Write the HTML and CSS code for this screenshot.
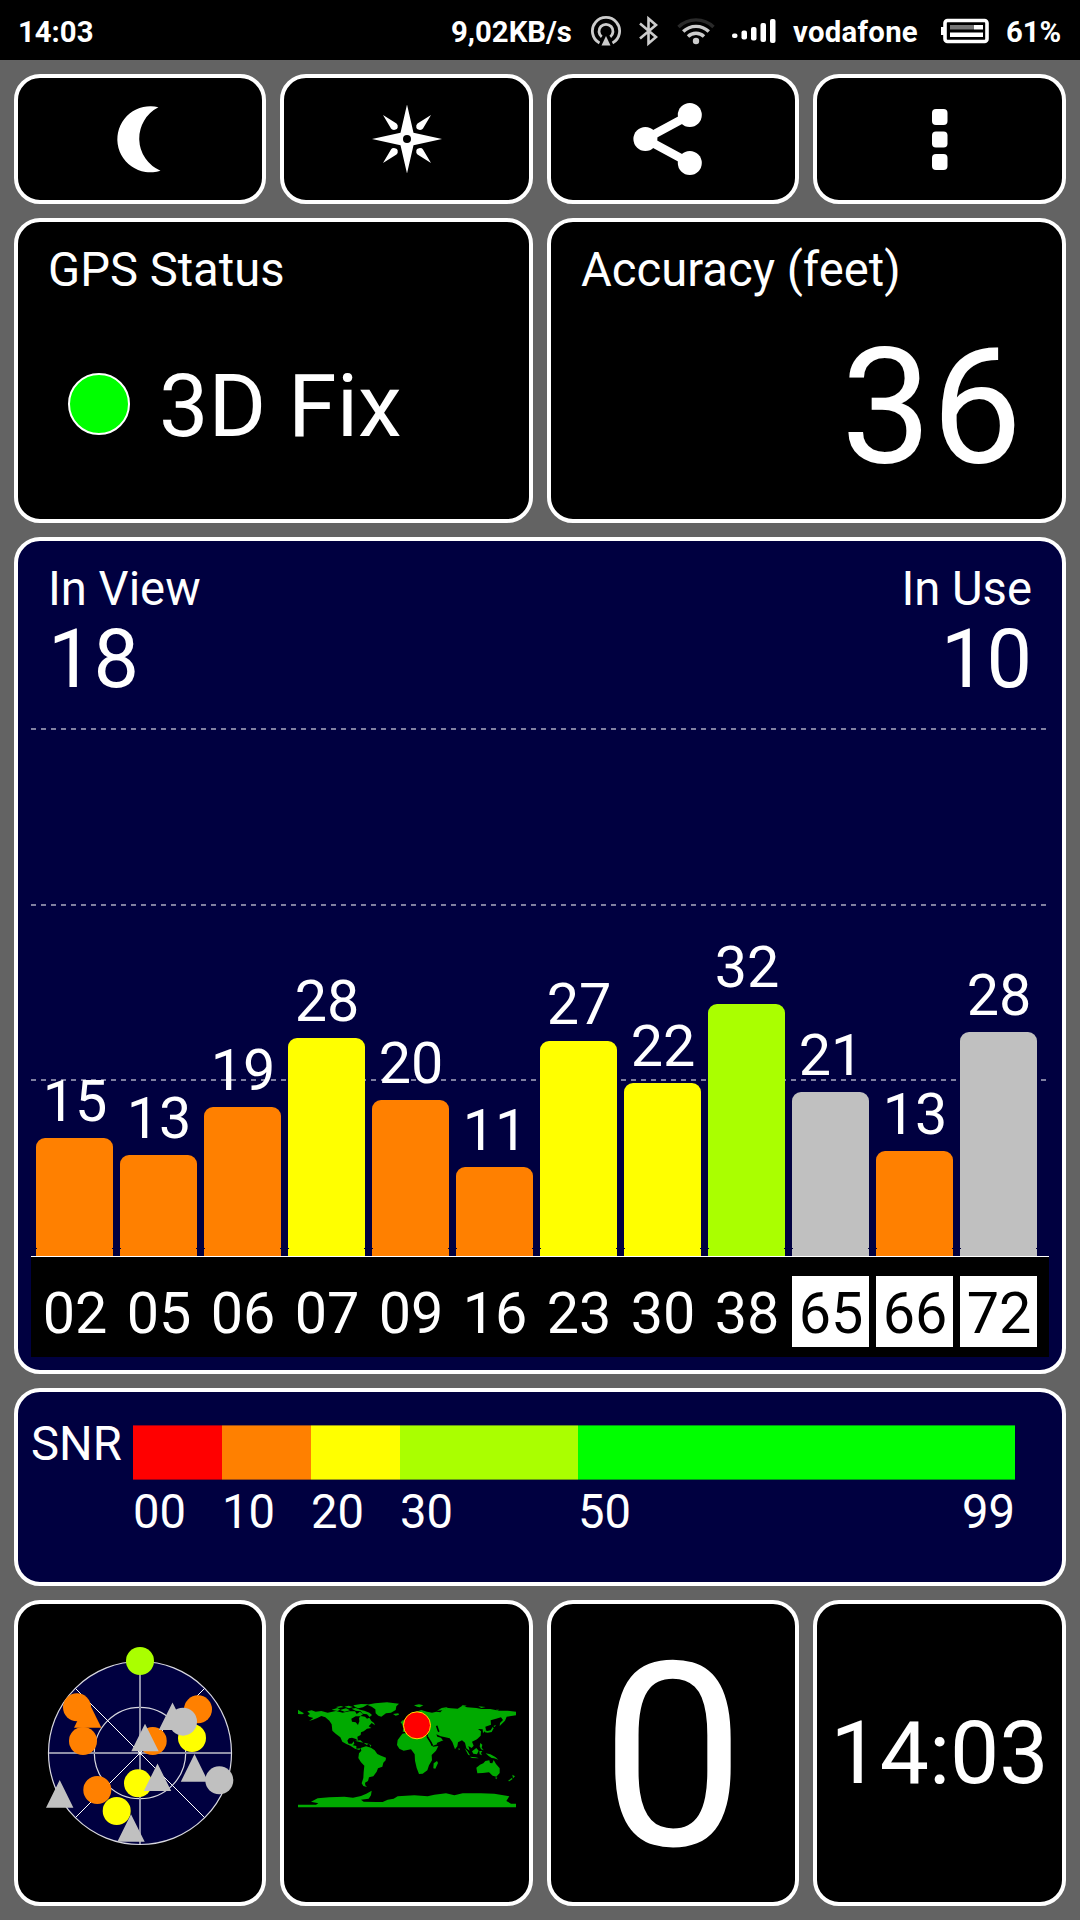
FILE: index.html
```html
<!DOCTYPE html>
<html lang="en">
<head>
<meta charset="utf-8">
<title>GPS Test</title>
<link rel="stylesheet" href="styles.css">
</head>
<body>
<header class="status">
  <span>14:03</span>
  <span>9,02KB/s</span>
  <svg width="32" height="32" viewBox="-16 -16 32 32" fill="none" stroke="#ccc" stroke-width="2.8"><path d="M-6.5 12A13.6 13.6 0 1 1 6.5 12"/><path d="M-4.3 5.8A7 7 0 1 1 4.3 5.8"/><path d="M0 5l4.5 9.5h-9z" fill="#ccc" stroke="none"/></svg>
  <svg width="22" height="32" viewBox="0 0 22 32" fill="none" stroke="#ccc" stroke-width="2.6"><path d="M3 8.500L19 22L11.500 28.500V3.500L19 10L3 23.500"/></svg>
  <svg width="40" height="32" viewBox="-20 0 40 32" fill="none" stroke="#ccc" stroke-width="3.4"><path d="M-17.500 12A25 25 0 0 1 17.500 12" stroke="#2a2a2a"/><path d="M-12.800 16.500A18.500 18.500 0 0 1 12.800 16.500"/><path d="M-8 21.500A11.500 11.500 0 0 1 8 21.500"/><circle cy="26" r="3.200" fill="#ccc" stroke="none"/></svg>
  <svg width="48" height="32" viewBox="0 0 48 32" fill="#fff"><rect x="2" y="18.500" width="5.500" height="4.500" rx="2"/><rect x="11.500" y="15.500" width="5.500" height="9" rx="2"/><rect x="21" y="12" width="5.500" height="13.500" rx="2"/><rect x="30.500" y="8" width="5.500" height="19" rx="2"/><rect x="40" y="4" width="5.500" height="24" rx="2"/></svg>
  <span class="carrier">vodafone</span>
  <svg width="48" height="32" viewBox="0 0 48 32"><rect x="4" y="5.500" width="42" height="21" rx="2.500" fill="none" stroke="#fff" stroke-width="3.600"/><path d="M0 12h3v8H0z" fill="#fff"/><path d="M9 10h24v4.500H9z" fill="#777"/><path d="M33 10h9v4.500h-9zM9 17.500h33v4.500H9z" fill="#fff"/></svg>
  <span>61%</span>
</header>

<main class="board">
  <button class="card tool" aria-label="Night mode"><svg width="80" height="80" viewBox="-40 -40 80 80" fill="#fff"><path d="M18.400-31.700A33 33 0 1 0 20.500 31.700A35 35 0 0 1 18.400-31.700Z"/></svg></button>
  <button class="card tool" aria-label="Compass"><svg width="80" height="80" viewBox="-40 -40 80 80" fill="#fff"><path d="M0-34.500L6.500-6.300L35 0L6.500 6.300L0 34.500L-6.500 6.300L-35 0L-6.500-6.300Z"/><path d="M-24-24L-10.500-15.500Q-8.800-14-9.300-11.500Q-9.500-9.500-12-9.200Q-15-8.800-16-10.500Z"/><path d="M24-24L10.500-15.500Q8.800-14 9.300-11.500Q9.500-9.500 12-9.200Q15-8.800 16-10.500Z"/><path d="M-24 24L-10.500 15.500Q-8.800 14-9.300 11.500Q-9.500 9.500-12 9.200Q-15 8.800-16 10.500Z"/><path d="M24 24L10.500 15.500Q8.800 14 9.300 11.500Q9.500 9.500 12 9.200Q15 8.800 16 10.500Z"/><circle r="4" fill="#000"/></svg></button>
  <button class="card tool" aria-label="Share"><svg width="80" height="80" viewBox="-40 -40 80 80" fill="#fff"><path d="M16.800-24L-27.600 0L16.800 24" fill="none" stroke="#fff" stroke-width="8.500"/><circle cx="16.800" cy="-24" r="12"/><circle cx="16.800" cy="24" r="12"/><circle cx="-27.600" r="12"/></svg></button>
  <button class="card tool" aria-label="More"><svg width="80" height="80" viewBox="-40 -40 80 80" fill="#fff"><rect x="-8" y="-30" width="15.500" height="16" rx="4"/><rect x="-8" y="-7.500" width="15.500" height="16" rx="4"/><rect x="-8" y="15" width="15.500" height="16" rx="4"/></svg></button>

  <section class="card half">
    <h2 class="label">GPS Status</h2>
    <div class="fix"><span class="lamp"></span><span class="fix-text">3D Fix</span></div>
  </section>
  <section class="card half">
    <h2 class="label">Accuracy (feet)</h2>
    <div class="accuracy">36</div>
  </section>

  <section class="card navy full sats">
    <div class="counts">
      <div><h2 class="label">In View</h2><div class="count">18</div></div>
      <div class="end"><h2 class="label">In Use</h2><div class="count">10</div></div>
    </div>
    <div class="chart">
      <div class="bars">
        <div class="sat"><span>15</span><i class="bar orange" style="height:118px"></i></div>
        <div class="sat"><span>13</span><i class="bar orange" style="height:101px"></i></div>
        <div class="sat"><span>19</span><i class="bar orange" style="height:149px"></i></div>
        <div class="sat"><span>28</span><i class="bar yellow" style="height:218px"></i></div>
        <div class="sat"><span>20</span><i class="bar orange" style="height:156px"></i></div>
        <div class="sat"><span>11</span><i class="bar orange" style="height:89px"></i></div>
        <div class="sat"><span>27</span><i class="bar yellow" style="height:215px"></i></div>
        <div class="sat"><span>22</span><i class="bar yellow" style="height:173px"></i></div>
        <div class="sat"><span>32</span><i class="bar lime" style="height:252px"></i></div>
        <div class="sat"><span>21</span><i class="bar grey" style="height:164px"></i></div>
        <div class="sat"><span>13</span><i class="bar orange" style="height:105px"></i></div>
        <div class="sat"><span>28</span><i class="bar grey" style="height:224px"></i></div>
      </div>
      <div class="ids">
        <span>02</span><span>05</span><span>06</span><span>07</span><span>09</span><span>16</span><span>23</span><span>30</span><span>38</span><span class="glonass">65</span><span class="glonass">66</span><span class="glonass">72</span>
      </div>
    </div>
  </section>

  <section class="card navy full snr">
    <span class="snr-name">SNR</span>
    <div class="scale">
      <div class="step"><i class="red"></i><span>00</span></div>
      <div class="step"><i class="orange"></i><span>10</span></div>
      <div class="step"><i class="yellow"></i><span>20</span></div>
      <div class="step"><i class="lime"></i><span>30</span></div>
      <div class="step"><i class="green"></i><span class="ends"><b>50</b><b>99</b></span></div>
    </div>
  </section>

  <section class="card tile">
    <svg width="220" height="220" viewBox="-110 -110 220 220">
      <circle r="91.500" fill="#000040" stroke="#d8d8e0" stroke-width="1.200"/>
      <circle r="45.700" fill="none" stroke="#d8d8e0" stroke-width="1.200"/>
      <path d="M-91 0H91M0-91V91" stroke="#8f8fa8" stroke-width="2"/>
      <path d="M-64.500-64.500L64.500 64.500M-64.500 64.500L64.500-64.500" stroke="#fff" stroke-width="1"/>
      <circle r="1.500" fill="#fff"/>
      <g fill="#ff8000"><circle cx="-63" cy="-45.700" r="14"/><path d="M-52.300-53L-38.600-25.300H-66Z"/><circle cx="-57" cy="-12" r="14"/><circle cx="58" cy="-43.700" r="14"/><circle cx="12.700" cy="-12" r="14"/><circle cx="-42.700" cy="37" r="14"/></g>
      <circle cy="-92" r="14" fill="#af0"/>
      <g fill="#ff0"><circle cx="52" cy="-15" r="14"/><circle cx="-2" cy="30.300" r="14"/><circle cx="-23.300" cy="58" r="14"/></g>
      <g fill="#c0c0c0"><path d="M32.500-50.500L46.200-23H18.800ZM5-29.300L18.700-1.700H-8.700ZM17.500 10.500L31.200 38H3.800ZM54.500 1L68.200 28.700H40.800ZM-9 61.300L4.700 88.700H-22.700ZM-80.300 27L-66.600 54.700H-94Z"/><circle cx="43" cy="-31.300" r="14"/><circle cx="79.300" cy="27.300" r="14"/></g>
    </svg>
  </section>
  <section class="card tile">
    <svg class="map" width="218" height="106" viewBox="51 65 654 318">
      <g fill="#0a0">
        <path d="M51 88L58 93L69 99L64 102L51 101ZM79 93L92 90L104 94L121 92L140 97L165 92L185 97L205 93L222 93L227 101L237 94L246 102L237 108L224 108L211 115L213 124L224 126L231 134L235 123L234 113L239 107L252 109L258 115L265 112L271 122L279 128L282 135L272 128L263 138L271 143L258 145L248 153L240 156L239 164L229 169L231 182L225 176L213 172L204 174L199 181L203 190L213 190L218 183L220 190L215 195L226 197L226 205L239 204L235 209L222 205L208 196L196 191L184 184L178 171L164 160L154 151L152 132L145 121L133 111L121 107L109 113L96 118L84 122L97 113L84 109L80 105L87 101Z"/>
        <path d="M258 73L282 69L318 66L354 70L346 78L344 89L330 97L315 99L301 109L292 106L284 99L283 87L272 79ZM336 101L352 99L354 103L344 106Z"/>
        <path d="M152 88L169 83L178 88L169 92ZM177 89L195 84L207 90L191 94ZM165 80L180 77L188 80L172 83ZM190 79L203 76L216 80L204 84ZM217 75L240 71L262 72L246 81L232 84L222 80ZM212 85L224 83L237 88L250 91L265 97L273 104L266 110L258 102L245 100L239 93L224 91Z"/>
        <path d="M239 203L255 198L270 202L281 210L289 221L300 226L315 232L314 240L307 247L304 259L291 264L287 274L277 288L264 291L261 302L252 307L253 315L258 320L247 317L242 309L247 293L248 275L250 256L240 246L232 233L234 219L241 211ZM222 181L238 180L247 187L233 184ZM248 187L263 190L257 194ZM265 190L271 196L268 199Z"/>
        <path d="M359 126L366 119L374 124L372 133L378 139L367 143L363 131ZM367 146L365 154L379 156L387 147L398 143L407 151L415 157L420 147L431 155L442 158L440 168L451 188L456 196L470 191L487 182L480 172L469 169L466 162L479 168L493 171L506 174L514 185L522 207L529 198L531 186L543 180L552 187L556 204L566 211L562 197L572 203L578 196L573 184L588 177L599 166L600 153L591 146L605 147L606 158L615 150L613 139L630 133L629 120L645 115L660 111L666 119L657 128L656 137L672 121L677 109L705 105V94L680 91L654 91L628 86L602 86L586 83L558 81L544 76L530 85L510 84L496 82L485 88L478 96L466 94L453 97L438 94L421 89L405 94L391 104L382 113L390 122L378 135Z"/>
        <path d="M364 160L378 157L400 156L404 164L420 166L439 167L446 182L456 199L472 197L465 211L452 224L453 240L444 255L439 270L425 280L414 281L407 263L402 241L401 222L390 207L368 211L355 205L348 194L350 179ZM468 242L471 248L463 265L457 264L458 249Z"/>
        <path d="M399 75L414 72L427 75L416 81L408 79ZM468 91L482 83L500 80L486 90ZM542 74L557 76L549 80ZM592 78L614 80L601 83ZM645 88L655 88L648 91ZM612 150L620 152L629 150L635 140L638 144L632 155L620 157L612 156ZM637 137L645 134L641 140ZM598 188L604 193L602 202L608 210L600 207L596 198ZM573 213L586 203L593 211L588 222L577 220ZM551 204L560 213L567 225L562 224ZM566 229L584 231L594 234L573 233ZM595 212L604 212L600 218L603 225L596 222ZM614 219L628 222L643 230L652 238L639 234L632 233L623 227ZM533 202L537 207L533 210Z"/>
        <path d="M586 262L597 253L607 249L613 242L625 240L627 248L634 249L638 239L645 251L656 264L656 278L646 289L635 286L624 276L605 278L589 279ZM642 292L649 291L646 297ZM694 283L702 288L696 294ZM692 293L695 296L685 303L681 302Z"/>
        <path d="M51 373H105L112 369L90 364L110 354L145 351L190 349L216 352L240 347L256 340L272 331L270 345L263 355L240 358L248 364L286 365L305 365L320 358L338 355L350 348L400 345L440 348L460 343L495 339L520 345L545 339L600 339L640 340L685 348L676 362L690 370H705V381H51Z"/>
      </g>
      <path d="M438 168L450 187L454 196M467 136L472 151L474 154M486 183L468 190" fill="none" stroke="#000" stroke-width="5"/>
      <circle cx="408" cy="135" r="40.500" fill="#f00" stroke="#fd0" stroke-width="3"/>
    </svg>
  </section>
  <section class="card tile speed">0</section>
  <section class="card tile clock">14:03</section>
</main>
</body>
</html>
```

FILE: styles.css
```css
* { box-sizing: border-box; }
body {
  margin: 0;
  width: 1080px;
  height: 1920px;
  overflow: hidden;
  background: #636363;
  color: #fff;
  font-family: Roboto, "Liberation Sans", sans-serif;
}
svg { display: block; flex: none; }

.status {
  display: grid;
  grid-template-columns: 433px 139px 47px 39px 54px 62px 149px 65px 74px;
  align-items: center;
  height: 60px;
  padding-left: 18px;
  background: #000;
  font-size: 29.3px;
  font-weight: 700;
  line-height: 60px;
  white-space: nowrap;
}
.status span { padding-top: 2px; }
.status .carrier { padding-left: 1px; letter-spacing: 0.3px; }

.board {
  display: grid;
  grid-template-columns: 252px 253px 252px 253px;
  grid-template-rows: 130px 305px 837px 198px 306px;
  gap: 14px;
  padding: 14px;
}
.card {
  border: 4px solid #fff;
  border-radius: 26px;
  background: #000;
  color: inherit;
  min-width: 0;
}
.navy { background: #000040; }
.half { grid-column: span 2; padding: 20px 30px 0; }
.full { grid-column: span 4; }
.tool, .tile { display: flex; align-items: center; justify-content: center; padding: 0; }

.label { margin: 0; font-size: 47.2px; font-weight: 400; line-height: 56px; }
.fix {
  display: flex;
  align-items: center;
  gap: 29px;
  height: 62px;
  margin: 75px 0 0 20px;
  font-size: 88px;
  line-height: 66px;
}
.fix-text { padding-top: 3px; }
.lamp { width: 62px; height: 62px; border: 2px solid #fff; border-radius: 50%; background: #0f0; }
.accuracy { margin: 29px 10px 0 0; font-size: 161px; line-height: 160px; text-align: right; }

.sats { padding: 20px 13px 0; }
.counts { display: flex; justify-content: space-between; height: 167px; padding: 0 17px; }
.end { text-align: right; }
.count { font-size: 81px; line-height: 86px; }

.chart { display: flex; flex-direction: column; width: 1018px; }
.bars, .ids { display: flex; gap: 7px; padding: 0 5px; }
.bars {
  height: 529px;
  align-items: flex-end;
  border-bottom: 1px solid #fff;
  background:
    repeating-linear-gradient(to right, #8080a0 0 5px, transparent 5px 10px) 0 0 / 1015px 2px no-repeat,
    repeating-linear-gradient(to right, #8080a0 0 5px, transparent 5px 10px) 0 176px / 1015px 2px no-repeat,
    repeating-linear-gradient(to right, #8080a0 0 5px, transparent 5px 10px) 0 351px / 1015px 2px no-repeat;
}
.sat { display: flex; flex-direction: column; align-items: center; width: 77px; }
.sat span { font-size: 57.5px; line-height: 60px; margin-bottom: 6px; padding-left: 1px; }
.bar { position: relative; width: 77px; border-radius: 9px 9px 0 0; }
.bar::after {
  content: "";
  position: absolute;
  inset: auto 0 7px;
  height: 1px;
  background: linear-gradient(to right, #000040 1px, transparent 1px calc(100% - 1px), #000040 0);
}
.ids { height: 100px; padding-top: 19px; background: #000; }
.ids span { width: 77px; height: 71px; padding-left: 1px; font-size: 57.5px; line-height: 75px; text-align: center; }
.ids .glonass { background: #fff; color: #000; }

.red { background: #f00; }
.orange { background: #ff8000; }
.yellow { background: #ff0; }
.lime { background: #af0; }
.green { background: #0f0; }
.grey { background: #c0c0c0; }

.snr { display: flex; padding: 33px 13px 0; font-size: 47.2px; line-height: 56px; }
.snr-name { width: 102px; margin-top: -9px; }
.scale { display: grid; grid-template-columns: 89px 89px 89px 178px 437px; }
.step i { display: block; height: 55px; box-shadow: inset 0 1px rgba(0, 0, 64, .4), inset 0 -1px rgba(0, 0, 64, .4); }
.step span { display: block; margin-top: 4px; }
.step .ends { display: flex; justify-content: space-between; }
.step b { font-weight: 400; }

.map { margin-top: 3px; }
.speed { padding-top: 10px; font-size: 257px; line-height: 288px; }
.clock { font-size: 87.6px; }
```
